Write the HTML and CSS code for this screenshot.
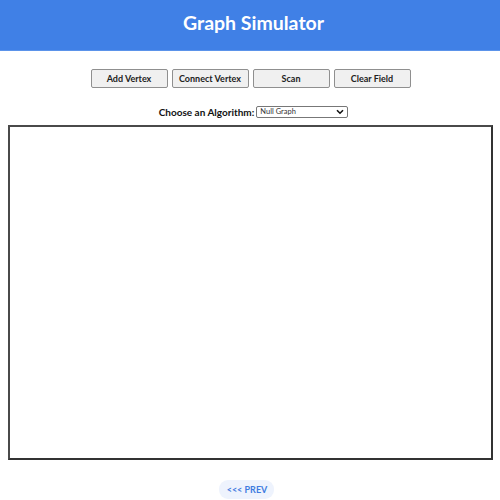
FILE: index.html
```html
<!DOCTYPE html>
<html>
<head>
<meta charset="utf-8">
<link rel="stylesheet" href="styles.css">
</head>
<body>
<header class="top">
  <h1 class="title">Graph Simulator</h1>
</header>
<main class="main">
  <div class="controls">
    <button class="btn">Add Vertex</button>
    <button class="btn">Connect Vertex</button>
    <button class="btn">Scan</button>
    <button class="btn">Clear Field</button>
  </div>
  <div class="algo">
    <label class="algo-label">Choose an Algorithm:</label>
    <div class="select">
      <span class="select-text">Null Graph</span>
      <svg class="chev" width="8" height="6" viewBox="0 0 8 6"><path d="M1 1.2 L4 4.2 L7 1.2" fill="none" stroke="#111" stroke-width="1.6"/></svg>
    </div>
  </div>
  <div class="field"></div>
  <div class="nav">
    <a class="prev">&lt;&lt;&lt; PREV</a>
  </div>
</main>
</body>
</html>
```

FILE: styles.css
```css
html, body {
  margin: 0;
  padding: 0;
  background: #fff;
  font-family: Lato, "Liberation Sans", sans-serif;
}
.top {
  height: 50px;
  background: #4080e6;
  border-bottom: 1px solid #5b93ea;
  display: flex;
  align-items: center;
  justify-content: center;
}
.title {
  margin: 0;
  color: #fff;
  font-size: 19.5px;
  font-weight: 700;
  letter-spacing: 0;
  padding-bottom: 5px;
  padding-left: 7px;
}
.main {
  padding: 0 7px 0 8px;
}
.controls {
  margin-top: 18px;
  display: flex;
  justify-content: center;
  gap: 4px;
}
.btn {
  width: 77px;
  height: 19px;
  padding: 0;
  background: #f0f0f0;
  border: 1px solid #8f8f8f;
  border-radius: 2px;
  font-family: Lato, "Liberation Sans", sans-serif;
  font-size: 9px;
  font-weight: 700;
  color: #222;
}
.algo {
  margin-top: 18px;
  display: flex;
  justify-content: center;
  align-items: center;
  gap: 2px;
  height: 11px;
  padding-left: 6px;
}
.algo-label {
  font-size: 10px;
  font-weight: 700;
  color: #111;
}
.select {
  width: 84px;
  height: 10px;
  border: 1px solid #777;
  border-radius: 2px;
  display: flex;
  align-items: center;
  justify-content: space-between;
  padding: 0 3px 0 3px;
  box-sizing: content-box;
}
.select-text {
  font-size: 7.5px;
  color: #333;
}
.field {
  margin-top: 8px;
  height: 331px;
  border: 2px solid #4a4a4a;
  border-right-color: #333;
  border-bottom-color: #333;
}
.nav {
  display: flex;
  justify-content: center;
  margin-top: 20px;
}
.prev {
  background: #eef3fd;
  color: #3f7be0;
  font-size: 9px;
  font-weight: 700;
  padding: 4px 7px 4px 8px;
  border-radius: 9px;
  margin-left: -8px;
}
```
